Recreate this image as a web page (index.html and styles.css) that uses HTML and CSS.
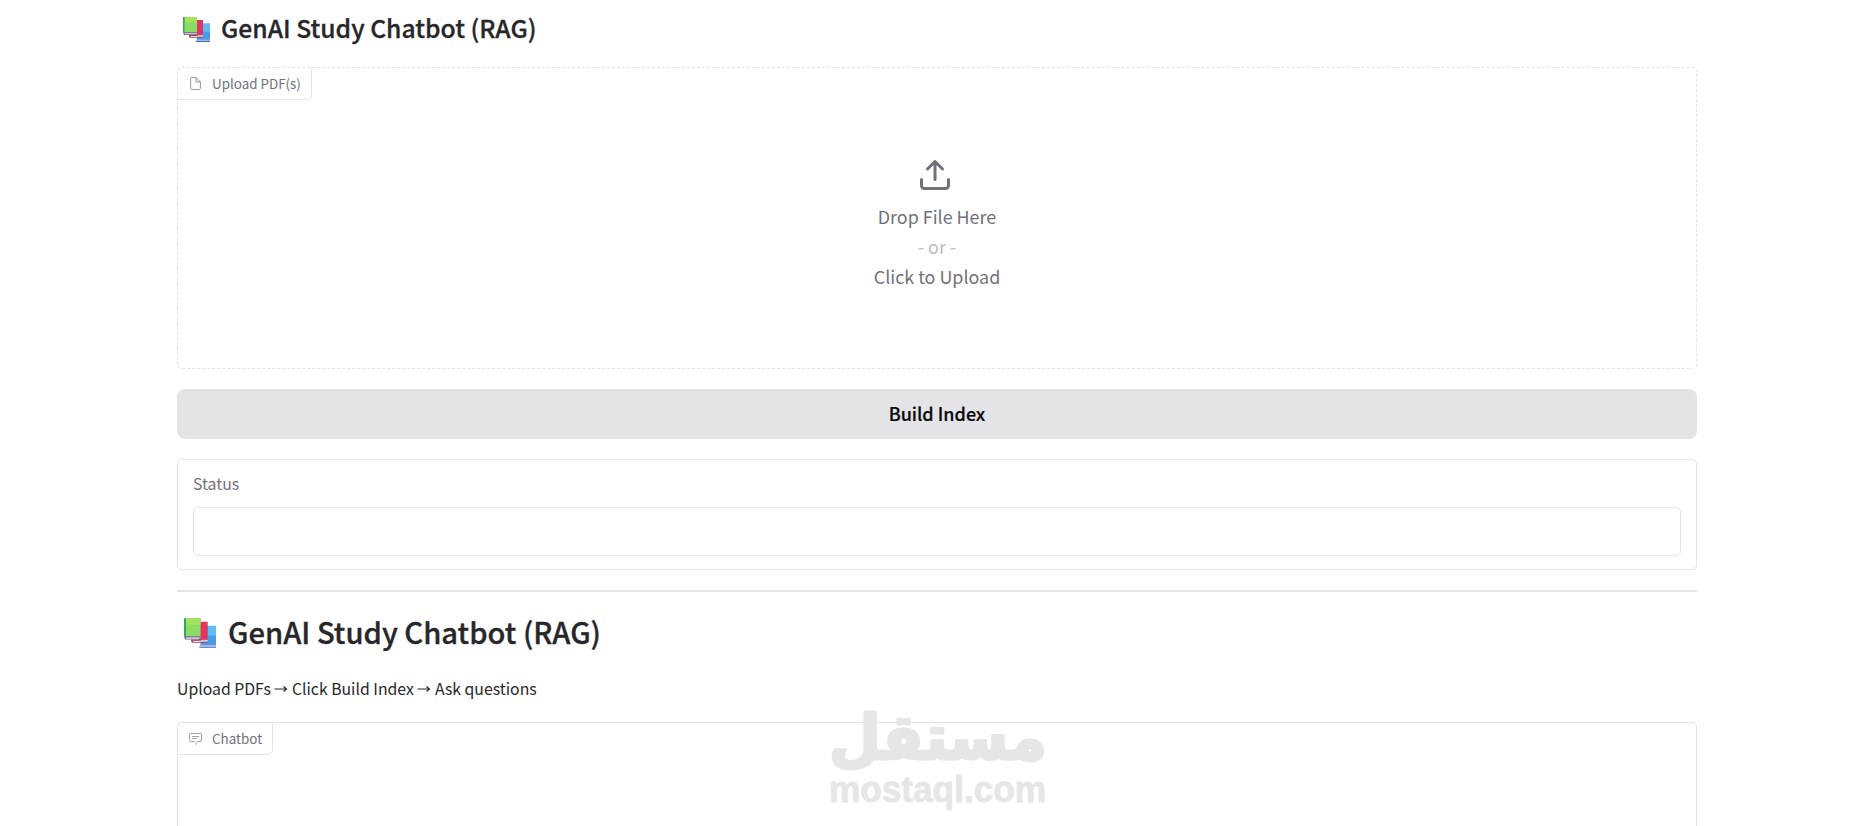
FILE: index.html
```
<!DOCTYPE html>
<html lang="en">
<head>
    <meta charset="UTF-8">
    <title>GenAI Study Chatbot (RAG)</title>
    <link rel="stylesheet" href="styles.css">
</head>
<body>
    <!-- Stacked books, used in both headings -->
    <svg class="defs" width="0" height="0">
        <symbol id="books" viewBox="0 0 81 75">
            <path fill="#5fbcf7" d="M44 19h37v50H42z"/>
            <path fill="#4a9ae6" d="M60 44h21v25H42v-9h18z"/>
            <path fill="#b5b4da" d="M40 68h41v4H40z"/>
            <path fill="#356cc0" d="M37 72h44v3H40z"/>
            <path fill="#e0355f" d="M38 9h22v46H38z"/>
            <path fill="#d9c3d3" d="M19 55h41v4H19z"/>
            <path fill="#a5404f" d="M17 54h26v3H22l2 3h36v2H20z"/>
            <path fill="#8bdc64" d="M4 0h38v46H4z"/>
            <path fill="#a0e35c" d="M4 0h38v16H4z"/>
            <path fill="#37a35a" d="M0 0h5v46H0z"/>
            <path fill="#c9c3dd" d="M2 46h40v5H2z"/>
            <path fill="#67607c" d="M0 46h42v2H4l2 4h37v2H3z"/>
        </symbol>
    </svg>

    <main class="container">
        <h2 class="title"><svg class="books"><use href="#books"/></svg><span>GenAI Study Chatbot (RAG)</span></h2>

        <div class="upload">
            <div class="block-label">
                <svg viewBox="0 0 24 24"><path d="M13 1H5a2 2 0 0 0-2 2v18a2 2 0 0 0 2 2h14a2 2 0 0 0 2-2V9z"/><path d="M13 1v8h8"/></svg>
                <span>Upload PDF(s)</span>
            </div>
            <div class="drop">
                <svg class="drop-icon" viewBox="0 0 24 24"><path d="M21 15v4a2 2 0 0 1-2 2H5a2 2 0 0 1-2-2v-4"/><path d="M17 8l-5-5-5 5M12 3v12"/></svg>
                <span>Drop File Here</span>
                <span class="or">- or -</span>
                <span>Click to Upload</span>
            </div>
        </div>

        <button class="build">Build Index</button>

        <div class="status">
            <label for="status">Status</label>
            <input type="text" id="status" readonly>
        </div>

        <hr>

        <h1 class="title title-large"><svg class="books"><use href="#books"/></svg><span>GenAI Study Chatbot (RAG)</span></h1>
        <p class="hint">Upload PDFs <svg class="arrow" viewBox="0 0 14 8"><path d="M0.5 4h12M9.500 1.500L12.500 4 9.500 6.500"/></svg> Click Build Index <svg class="arrow" viewBox="0 0 14 8"><path d="M0.5 4h12M9.500 1.500L12.500 4 9.500 6.500"/></svg> Ask questions</p>

        <div class="chatbot">
            <div class="block-label">
                <svg viewBox="0 0 13 13"><path d="M6.500 12.500l2-3H11a1.500 1.500 0 0 0 1.500-1.500V3A1.500 1.500 0 0 0 11 1.500H2A1.500 1.500 0 0 0 .5 3v5A1.500 1.500 0 0 0 2 9.500h4"/><path d="M3 4.500h7M3 6.500h5"/></svg>
                <span>Chatbot</span>
            </div>
        </div>
    </main>

    <svg class="watermark" viewBox="0 0 240 116">
        <text class="mark-ar" x="120" y="49" text-anchor="middle" textLength="218" lengthAdjust="spacingAndGlyphs">مستقل</text>
        <text class="mark-en" x="11" y="92" textLength="217" lengthAdjust="spacingAndGlyphs">mostaql.com</text>
    </svg>
</body>
</html>
```
FILE: styles.css
```
body {
    margin: 0;
    height: 826px;
    overflow: hidden;
    background: #fff;
    color: #27272a;
    font-family: "Noto Sans CJK SC", "Open Sans", sans-serif;
}
.defs {
    position: absolute;
}
.container {
    display: flex;
    flex-direction: column;
    width: 1520px;
    margin-left: 177px;
}
.title {
    display: flex;
    align-items: center;
    height: 58px;
    margin: 0 0 9px;
    padding-left: 6px;
    font-size: 24.7px;
    font-weight: 500;
    line-height: 55px;
    -webkit-text-stroke: 0.3px #27272a;
}
.title span {
    height: 58px;
}
.books {
    width: 27px;
    height: 25px;
    margin-right: 11px;
}
.title-large {
    height: 82px;
    margin: 0;
    padding-left: 7px;
    font-size: 29.2px;
    line-height: 79px;
}
.title-large span {
    height: 82px;
}
.title-large .books {
    width: 32px;
    height: 30px;
    margin-right: 12px;
}
.upload {
    box-sizing: border-box;
    height: 302px;
    border: 1px dashed #e4e4e7;
    border-radius: 5px;
}
.block-label {
    display: inline-flex;
    box-sizing: border-box;
    align-items: center;
    height: 33px;
    margin: -1px 0 0 -1px;
    padding: 0 10px 0 11px;
    border: 1px solid #e4e4e7;
    border-radius: 5px 0 5px 0;
    background: #fff;
    color: #71717a;
    font-size: 13.4px;
    line-height: 31px;
}
.upload .block-label {
    border-top-style: dashed;
    border-left-style: dashed;
}
.block-label svg {
    width: 13px;
    height: 13px;
    margin-right: 10px;
    fill: none;
    stroke: #8b8b93;
    stroke-width: 1.7;
}
.chatbot .block-label svg {
    stroke-width: 0.8;
}
.drop {
    display: flex;
    flex-direction: column;
    align-items: center;
    padding-top: 57px;
    color: #71717a;
    font-size: 17.9px;
    line-height: 30px;
}
.drop-icon {
    width: 36px;
    height: 36px;
    margin: 0 5px 8px 0;
    fill: none;
    stroke: #71717a;
    stroke-width: 2;
    stroke-linecap: round;
    stroke-linejoin: round;
}
.or {
    color: #bbbbc2;
}
.build {
    height: 50px;
    margin: 20px 0;
    padding: 0 0 2px;
    border: none;
    border-radius: 8px;
    background: #e4e4e7;
    color: #09090b;
    font-family: inherit;
    font-size: 18px;
    font-weight: 500;
    -webkit-text-stroke: 0.2px #09090b;
    cursor: pointer;
}
.status {
    display: flex;
    flex-direction: column;
    box-sizing: border-box;
    height: 111px;
    padding: 12px 15px;
    border: 1px solid #e4e4e7;
    border-radius: 5px;
}
.status label {
    height: 35px;
    color: #71717a;
    font-size: 15.8px;
    line-height: 24px;
}
.status input {
    box-sizing: border-box;
    height: 49px;
    border: 1px solid #e4e4e7;
    border-radius: 5px;
    outline: none;
}
hr {
    width: 100%;
    height: 2px;
    margin: 20px 0 0;
    border: none;
    background: #e4e4e7;
}
.hint {
    height: 30px;
    margin: 0 0 18px;
    font-size: 15.8px;
    line-height: 29px;
}
.arrow {
    width: 14px;
    height: 8px;
    vertical-align: 2px;
    fill: none;
    stroke: #27272a;
    stroke-width: 1.2;
}
.chatbot {
    height: 140px;
    border: 1px solid #e4e4e7;
    border-radius: 5px 5px 0 0;
}
/* Site mark over the bottom of the page */
.watermark {
    position: absolute;
    left: 818px;
    top: 710px;
    width: 240px;
    height: 116px;
    overflow: visible;
    fill: #e6e6e6;
    stroke: #e6e6e6;
    stroke-linejoin: round;
}
.mark-ar {
    font: bold 62px "DejaVu Sans", sans-serif;
    stroke-width: 3;
}
.mark-en {
    font: bold 36px "Liberation Sans", sans-serif;
    stroke-width: 0.8;
}
```
